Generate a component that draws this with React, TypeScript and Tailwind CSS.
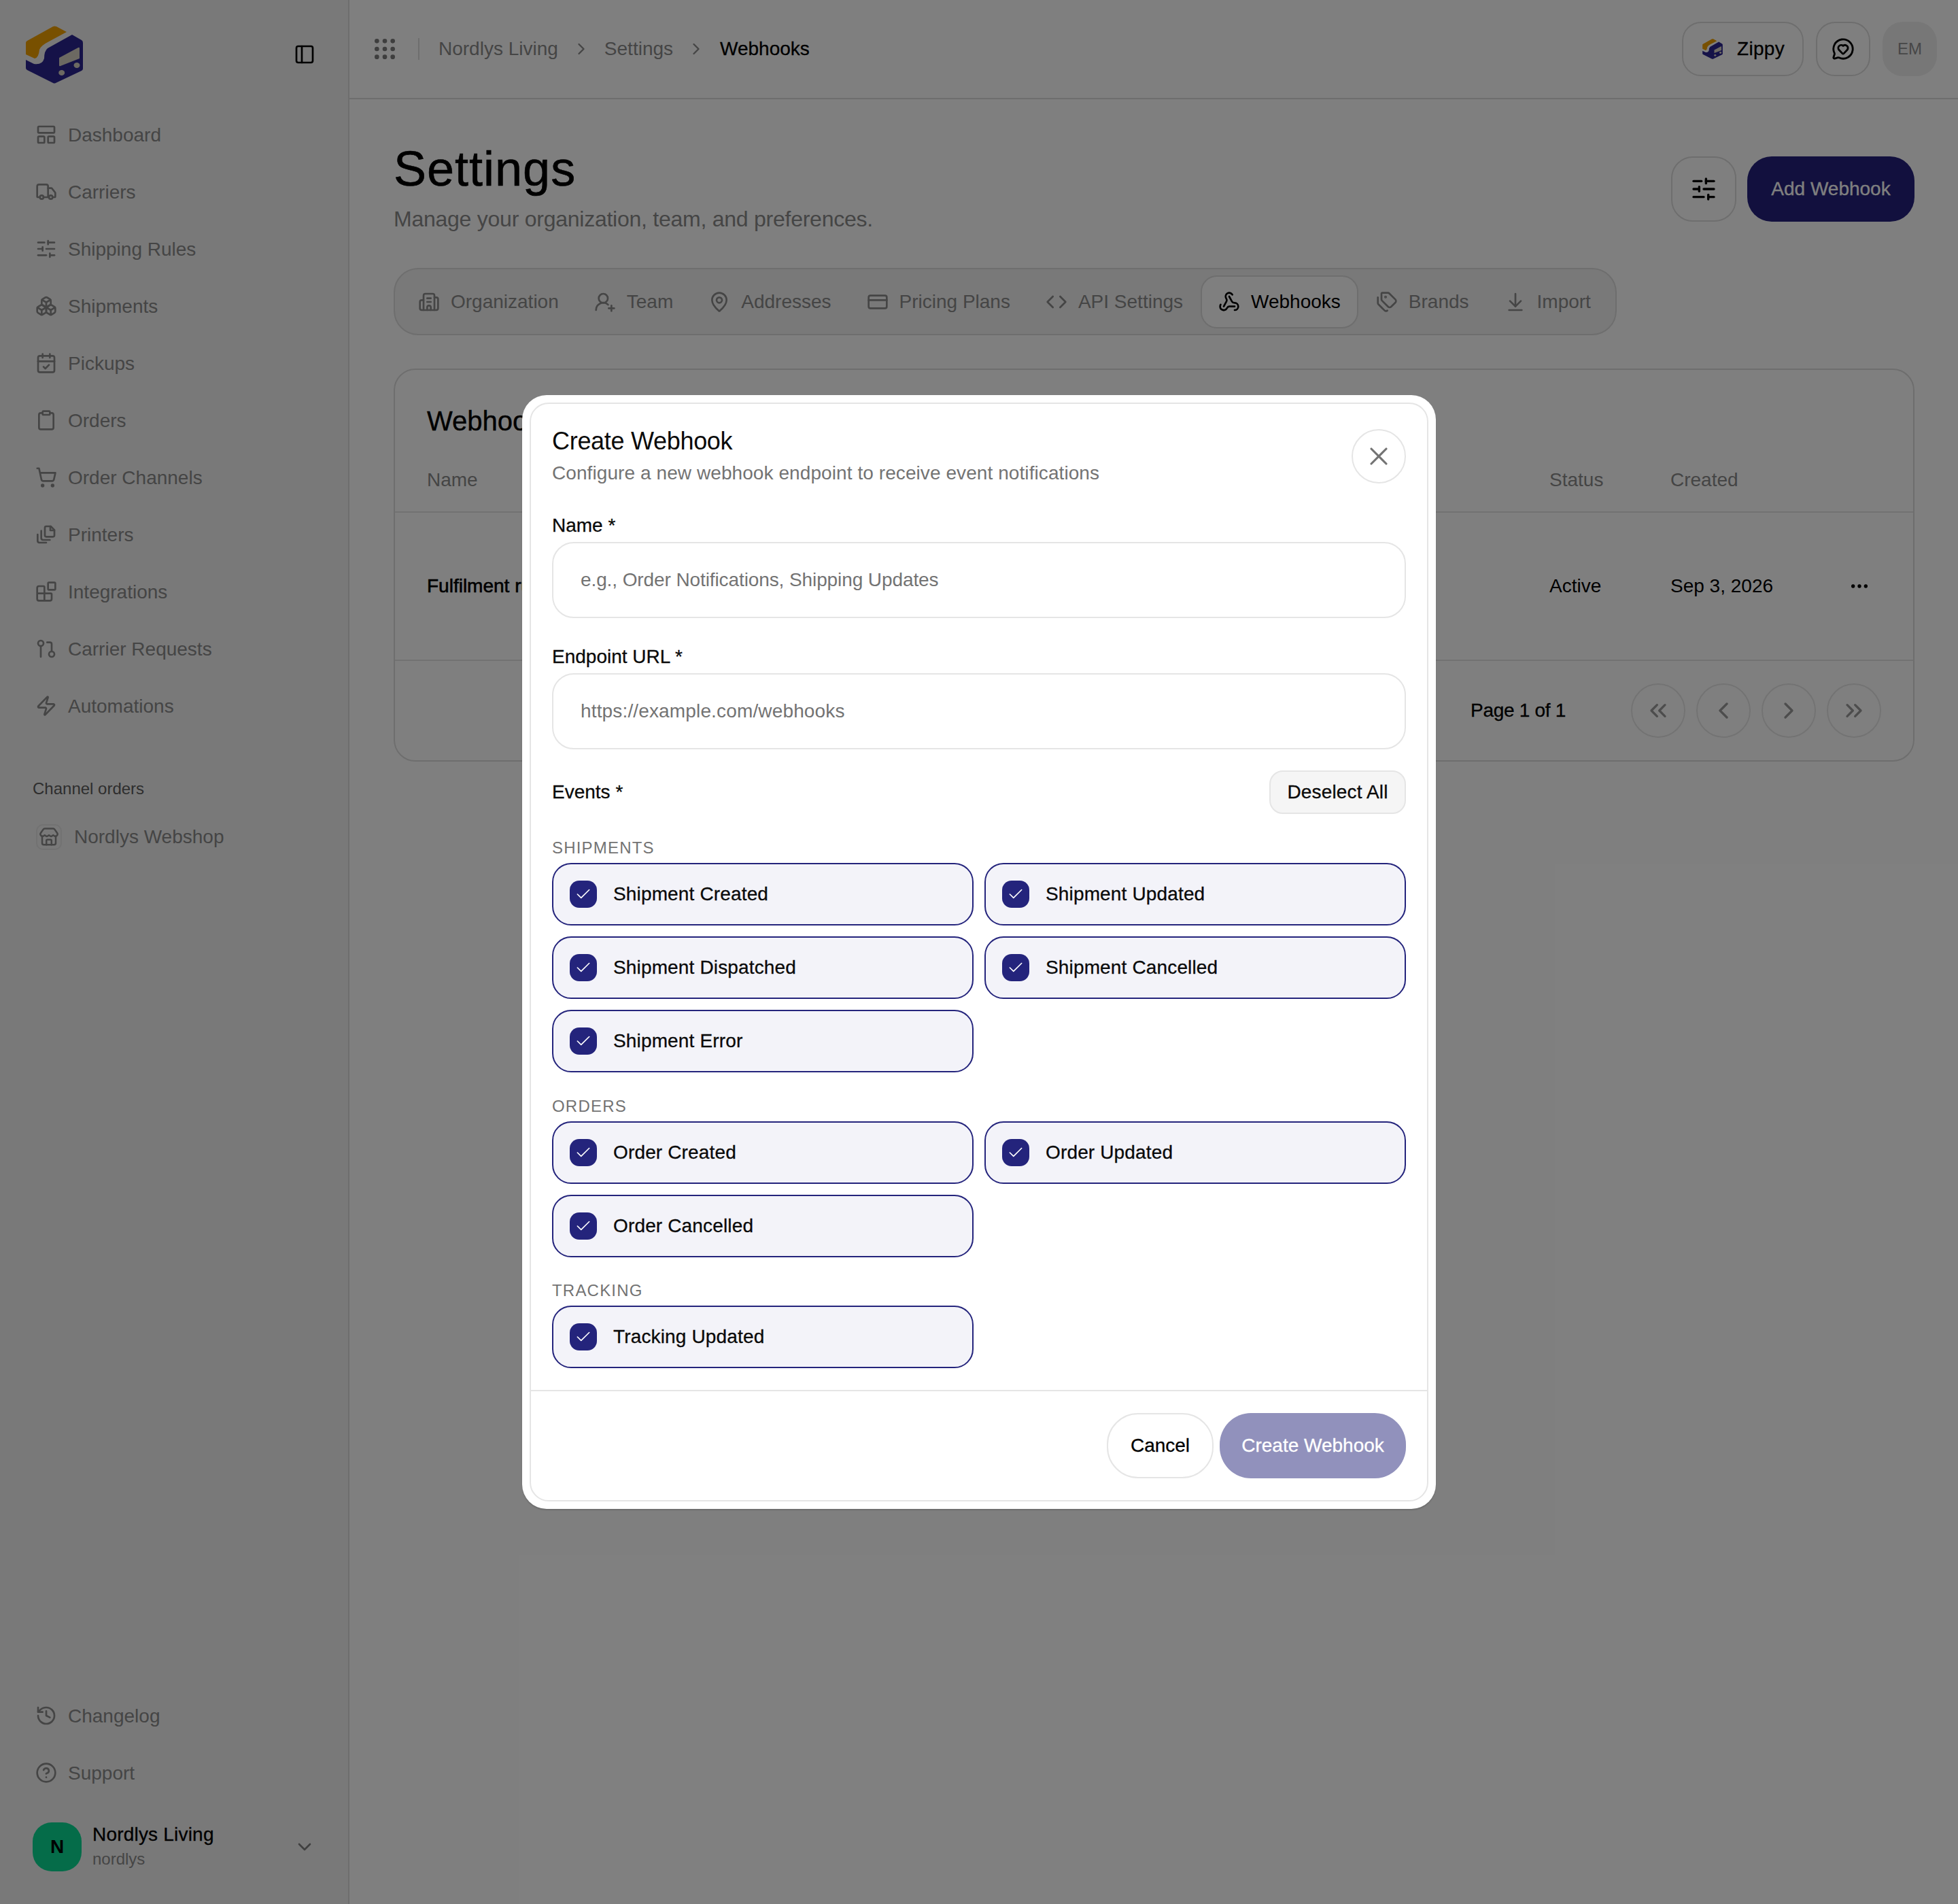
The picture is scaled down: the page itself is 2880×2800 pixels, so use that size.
import {
  Building2, ChevronDown, ChevronLeft, ChevronRight, ChevronsLeft, ChevronsRight, CircleHelp, Clipboard,
  Code, CreditCard, ArrowDownToLine, Ellipsis, Grip, History, LayoutPanelTop, MapPin, MessageCircleHeart,
  PanelLeft, ShoppingCart, SlidersHorizontal, Store, Tags, Truck, UserRoundPlus, Webhook, X, Zap, Boxes,
  CalendarCheck, Blocks, Check,
} from "lucide-react"
import type { ReactNode } from "react"

function Logo({ className }: { className: string }) {
  return (
    <svg viewBox="38 37 84 85" className={className}>
      <path d="M38 62 Q38 60 40 59 L78 38 Q80 37 83 38 L98 46 L72 60 Q60 66 58 72 Q57 84 51 85 L38 79 Z" fill="#f0a000" />
      <path d="M106 50 L120 58 Q122 59 122 62 L122 100 Q122 102 120 103 L82 121 Q80 122 78 121 L40 102 Q38 101 38 99 L38 87 L50 93 Q62 95 65 85 Q65 74 70 70 Z" fill="#2a2490" />
      <path d="M87 84 L115 69 Q117 68 117 70 L117 85 L89 96 Q87 97 87 95 Z" fill="#d8d2c4" />
      <ellipse cx="90.7" cy="106" rx="4.5" ry="4" fill="#d8d2c4" />
      <ellipse cx="113" cy="95" rx="4.5" ry="4" fill="#d8d2c4" />
    </svg>
  )
}

function PrintersIcon({ className }: { className: string }) {
  return (
    <svg viewBox="0 0 24 24" fill="none" stroke="currentColor" strokeWidth="2" strokeLinecap="round" strokeLinejoin="round" className={className}>
      <path d="M12 3h5l4 4v6a1.5 1.5 0 0 1-1.5 1.5h-7.5A1.5 1.5 0 0 1 10.500 13V4.500A1.500 1.500 0 0 1 12 3z" />
      <path d="M16.500 3v4.500H21" />
      <path d="M6.500 8v8a2 2 0 0 0 2 2H16" />
      <path d="M2.500 12v7a2 2 0 0 0 2 2H12" />
    </svg>
  )
}

function RequestsIcon({ className }: { className: string }) {
  return (
    <svg viewBox="0 0 24 24" fill="none" stroke="currentColor" strokeWidth="2" strokeLinecap="round" strokeLinejoin="round" className={className}>
      <circle cx="6" cy="6" r="3" />
      <path d="M6 9v12" />
      <path d="M13 5h3a2 2 0 0 1 2 2v8" />
      <circle cx="18" cy="18" r="3" />
    </svg>
  )
}

function NavItem({ icon, label }: { icon: ReactNode; label: string }) {
  return (
    <div className="flex h-[76px] items-center gap-[16px] pl-[52px] text-[#8a8a8a]">
      <span className="flex w-[32px] justify-center">{icon}</span>
      <span className="pt-[1px] text-[28px] leading-[40px]">{label}</span>
    </div>
  )
}

const navIcon = "size-[32px]"
const medium = "[-webkit-text-stroke:0.3px]"

function Sidebar() {
  return (
    <aside className="flex h-[2800px] w-[514px] shrink-0 flex-col border-r-2 border-[#dcdcdc] bg-[#f2f2f2] pb-[48px]">
      <div className="flex h-[160px] shrink-0 items-center justify-between pl-[38px] pr-[48px]">
        <Logo className="h-[85px] w-[84px]" />
        <PanelLeft className="size-[32px] text-black" />
      </div>
      <nav className="flex flex-col gap-[8px]">
        <NavItem label="Dashboard" icon={<LayoutPanelTop className={navIcon} />} />
        <NavItem label="Carriers" icon={<Truck className={navIcon} />} />
        <NavItem label="Shipping Rules" icon={<SlidersHorizontal className={navIcon} />} />
        <NavItem label="Shipments" icon={<Boxes className={navIcon} />} />
        <NavItem label="Pickups" icon={<CalendarCheck className={navIcon} />} />
        <NavItem label="Orders" icon={<Clipboard className={navIcon} />} />
        <NavItem label="Order Channels" icon={<ShoppingCart className={navIcon} />} />
        <NavItem label="Printers" icon={<PrintersIcon className={navIcon} />} />
        <NavItem label="Integrations" icon={<Blocks className={navIcon} />} />
        <NavItem label="Carrier Requests" icon={<RequestsIcon className={navIcon} />} />
        <NavItem label="Automations" icon={<Zap className={navIcon} />} />
      </nav>
      <div className="mt-[68px] pl-[48px] text-[24px] leading-[32px] text-[#5c5c5c]">Channel orders</div>
      <div className="mt-[35px] flex items-center gap-[18px] pl-[53px] text-[#8a8a8a]">
        <span className="flex size-[38px] items-center justify-center rounded-[10px] border-2 border-[#e4e4e4]">
          <Store className="size-[30px]" />
        </span>
        <span className="text-[28px] leading-[40px]">Nordlys Webshop</span>
      </div>
      <div className="mt-auto flex flex-col gap-[8px]">
        <NavItem label="Changelog" icon={<History className={navIcon} />} />
        <NavItem label="Support" icon={<CircleHelp className={navIcon} />} />
      </div>
      <div className="mt-[35px] flex items-center pl-[48px] pr-[48px]">
        <span className="flex size-[72px] items-center justify-center rounded-[28px] bg-[#0bd893] text-[28px] font-bold text-black">N</span>
        <div className="ml-[16px] flex-1">
          <div className={`-mt-[2px] text-[28px] leading-[36px] tracking-[0.2px] text-black ${medium}`}>Nordlys Living</div>
          <div className="mt-[2px] text-[24px] leading-[32px] text-[#8a8a8a]">nordlys</div>
        </div>
        <ChevronDown className="size-[32px] text-[#808080]" />
      </div>
    </aside>
  )
}

function Header() {
  return (
    <header className="flex h-[146px] items-center justify-between border-b-2 border-[#dcdcdc] pl-[32px] pr-[31px]">
      <div className="flex items-center text-[28px] leading-[40px] text-[#8a8a8a]">
        <Grip className="size-[40px] text-[#7c7c7c]" />
        <span className="ml-[29px] mr-[28px] h-[32px] w-[2px] bg-[#dcdcdc]" />
        <span>Nordlys Living</span>
        <ChevronRight className="mx-[20px] size-[28px]" />
        <span>Settings</span>
        <ChevronRight className="ml-[20px] mr-[21px] size-[28px]" />
        <span className={`text-black ${medium}`}>Webhooks</span>
      </div>
      <div className="flex items-center gap-[18px]">
        <div className={`flex h-[80px] w-[179px] items-center gap-[21px] rounded-[28px] border-2 border-[#dcdcdc] pl-[28px] text-[28px] tracking-[0.3px] text-black ${medium}`}>
          <Logo className="size-[30px]" />
          Zippy
        </div>
        <div className="flex size-[80px] items-center justify-center rounded-[28px] border-2 border-[#dcdcdc]">
          <MessageCircleHeart className="size-[34px] text-black" />
        </div>
        <div className="flex size-[80px] items-center justify-center rounded-[30px] bg-[#eeeeee] text-[24px] text-[#8f8f8f]">EM</div>
      </div>
    </header>
  )
}

function Tab({ icon, label, active }: { icon: ReactNode; label: string; active?: boolean }) {
  return (
    <div className={`flex h-[78px] items-center gap-[16px] rounded-[24px] border-2 px-[24px] ${active ? "border-[#dcdcdc] bg-white text-black" : "border-transparent text-[#8a8a8a]"}`}>
      <span className="flex w-[32px] justify-center">{icon}</span>
      <span className="text-[28px] leading-[40px]">{label}</span>
    </div>
  )
}

function PageButton({ children }: { children: ReactNode }) {
  return (
    <div className="flex size-[80px] items-center justify-center rounded-full border-2 border-[#e6e6e6] text-[#9a9a9a]">{children}</div>
  )
}

function Content() {
  return (
    <div className="pl-[65px] pr-[64px] pt-[64px]">
      <div className="flex items-center justify-between">
        <div>
          <h1 className="-mt-[2px] text-[72px] leading-[80px] tracking-[1px] text-black [-webkit-text-stroke:0.6px]">Settings</h1>
          <p className="mt-[10px] text-[32px] leading-[48px] tracking-[-0.25px] text-[#8a8a8a]">Manage your organization, team, and preferences.</p>
        </div>
        <div className="flex items-center gap-[16px]">
          <div className="flex size-[96px] items-center justify-center rounded-[32px] border-2 border-[#dcdcdc]">
            <SlidersHorizontal className="size-[40px] text-black" />
          </div>
          <div className={`flex h-[96px] w-[246px] items-center justify-center rounded-[36px] bg-[#24207c] text-[28px] text-white ${medium}`}>Add Webhook</div>
        </div>
      </div>
      <div className="mt-[48px] flex h-[99px] w-[1799px] items-center rounded-[36px] border-2 border-[#dcdcdc] bg-[#f2f2f2] px-[8px]">
        <Tab label="Organization" icon={<Building2 className={navIcon} />} />
        <Tab label="Team" icon={<UserRoundPlus className={navIcon} />} />
        <Tab label="Addresses" icon={<MapPin className={navIcon} />} />
        <Tab label="Pricing Plans" icon={<CreditCard className={navIcon} />} />
        <Tab label="API Settings" icon={<Code className={navIcon} />} />
        <Tab active label="Webhooks" icon={<Webhook className={navIcon} />} />
        <Tab label="Brands" icon={<Tags className={navIcon} />} />
        <Tab label="Import" icon={<ArrowDownToLine className={navIcon} />} />
      </div>
      <div className="mt-[49px] h-[578px] rounded-[32px] border-2 border-[#dcdcdc] bg-white">
        <div className="flex h-[116px] items-end px-[47px] pb-[17px] text-[40px] leading-[48px] text-black [-webkit-text-stroke:0.4px]">Webhooks</div>
        <div className="flex h-[94px] items-center border-b-2 border-[#e4e4e4] px-[47px] text-[28px] text-[#8a8a8a]">
          <span className="flex-1">Name</span>
          <span className="w-[178px]">Status</span>
          <span className="w-[310px]">Created</span>
        </div>
        <div className="flex h-[218px] items-center border-b-2 border-[#e4e4e4] px-[47px] text-[28px] text-black">
          <span className="flex-1 [-webkit-text-stroke:0.6px]">Fulfilment rules</span>
          <span className="w-[178px]">Active</span>
          <span className="w-[262px]">Sep 3, 2026</span>
          <span className="w-[48px]"><Ellipsis className="size-[32px]" /></span>
        </div>
        <div className="flex h-[146px] items-center justify-end gap-[16px] px-[47px]">
          <span className={`mr-[80px] text-[28px] tracking-[-0.3px] text-black ${medium}`}>Page 1 of 1</span>
          <PageButton><ChevronsLeft className="size-[40px]" /></PageButton>
          <PageButton><ChevronLeft className="size-[40px]" /></PageButton>
          <PageButton><ChevronRight className="size-[40px]" /></PageButton>
          <PageButton><ChevronsRight className="size-[40px]" /></PageButton>
        </div>
      </div>
    </div>
  )
}

function EventCard({ label }: { label: string }) {
  return (
    <div className="flex h-[92px] items-center gap-[24px] rounded-[28px] border-2 border-[#24247c] bg-[#f3f3f9] pl-[24px]">
      <span className="flex size-[40px] items-center justify-center rounded-[14px] bg-[#24247c]">
        <Check className="size-[26px] text-white" strokeWidth={1.500} />
      </span>
      <span className={`text-[28px] leading-[40px] tracking-[0.15px] text-[#0a0a0a] ${medium}`}>{label}</span>
    </div>
  )
}

function EventGroup({ title, events }: { title: string; events: string[] }) {
  return (
    <div>
      <div className="text-[24px] uppercase leading-[32px] tracking-[0.05em] text-[#737373]">{title}</div>
      <div className="mt-[6px] grid grid-cols-2 gap-[16px]">
        {events.map((e) => (
          <EventCard key={e} label={e} />
        ))}
      </div>
    </div>
  )
}

function Modal() {
  return (
    <div className="w-[1344px] rounded-[36px] bg-white p-[11px] shadow-[0_2px_2px_rgba(0,0,0,0.15)]">
      <div className="rounded-[28px] border-2 border-[#e5e5e5]">
        <div className="px-[31px] pb-[32px] pt-[33px]">
          <div className="flex justify-between">
            <div>
              <h2 className="text-[36px] leading-[44px] tracking-[-0.3px] text-[#0a0a0a]">Create Webhook</h2>
              <p className="mt-[5px] text-[28px] leading-[40px] tracking-[0.08px] text-[#737373]">Configure a new webhook endpoint to receive event notifications</p>
            </div>
            <div className="mt-[4px] flex size-[80px] items-center justify-center rounded-full border-2 border-[#e5e5e5]">
              <X className="size-[44px] text-[#737373]" strokeWidth={1.700} />
            </div>
          </div>
          <label className={`mt-[37px] block text-[28px] leading-[40px] text-[#0a0a0a] ${medium}`}>Name *</label>
          <input
            placeholder="e.g., Order Notifications, Shipping Updates"
            className="mt-[4px] block h-[112px] w-full rounded-[32px] border-2 border-[#e5e5e5] bg-white px-[40px] text-[28px] tracking-[-0.1px] outline-none placeholder:text-[#737373]"
          />
          <label className={`mt-[37px] block text-[28px] leading-[40px] text-[#0a0a0a] ${medium}`}>Endpoint URL *</label>
          <input
            placeholder="https://example.com/webhooks"
            className="mt-[4px] block h-[112px] w-full rounded-[32px] border-2 border-[#e5e5e5] bg-white px-[40px] text-[28px] tracking-[0.15px] outline-none placeholder:text-[#737373]"
          />
          <div className="mt-[31px] flex items-center justify-between">
            <span className={`text-[28px] leading-[40px] text-[#0a0a0a] ${medium}`}>Events *</span>
            <span className={`flex h-[64px] w-[201px] items-center justify-center rounded-[20px] border-2 border-[#e5e5e5] bg-[#f5f5f5] text-[28px] tracking-[0.15px] text-[#0a0a0a] ${medium}`}>Deselect All</span>
          </div>
          <div className="mt-[34px] flex flex-col gap-[33.5px]">
            <EventGroup title="Shipments" events={["Shipment Created", "Shipment Updated", "Shipment Dispatched", "Shipment Cancelled", "Shipment Error"]} />
            <EventGroup title="Orders" events={["Order Created", "Order Updated", "Order Cancelled"]} />
            <EventGroup title="Tracking" events={["Tracking Updated"]} />
          </div>
        </div>
        <div className="flex justify-end gap-[9px] border-t-2 border-[#e5e5e5] px-[31px] pb-[32px] pt-[32px]">
          <span className={`flex h-[96px] w-[157px] items-center justify-center rounded-[46px] border-2 border-[#e5e5e5] text-[28px] text-black ${medium}`}>Cancel</span>
          <span className={`flex h-[96px] w-[274px] items-center justify-center rounded-[46px] bg-[#9191bc] text-[28px] text-white ${medium}`}>Create Webhook</span>
        </div>
      </div>
    </div>
  )
}

export default function App() {
  return (
    <div className="relative flex h-[2800px] w-[2880px] overflow-hidden bg-white font-['Liberation_Sans',sans-serif]">
      <Sidebar />
      <main className="min-w-0 flex-1">
        <Header />
        <Content />
      </main>
      {/* dialog backdrop */}
      <div className="absolute inset-0 flex items-center justify-center bg-black/50">
        <Modal />
      </div>
    </div>
  )
}
